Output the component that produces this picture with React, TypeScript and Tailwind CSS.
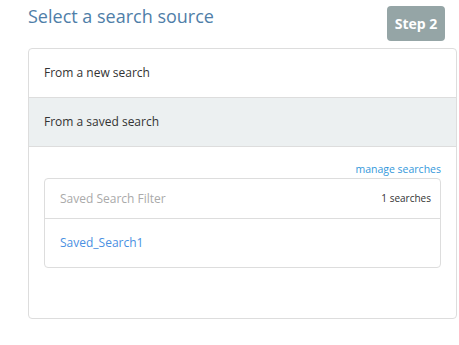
export default function App() {
  return (
    <div className="w-[459px] h-[345px] bg-white font-['Open_Sans',sans-serif] text-[#333]">
      <div className="pl-[28px] pr-[2px]">
        {/* Header */}
        <div className="flex items-start justify-between h-[48px]">
          <h1 className="pt-[4px] text-[18px] leading-[24px] text-[#4f7ea8]">Select a search source</h1>
          <div className="mt-[6px] mr-[12px] w-[58px] h-[35px] rounded-[4px] bg-[#95a5a6] text-white text-[14px] font-bold flex items-center justify-center">
            Step 2
          </div>
        </div>

        {/* Source panel */}
        <div className="border border-[#dddddd] rounded-[4px] h-[271px]">
          <div className="h-[49px] flex items-center px-[15px] text-[12px] border-b border-[#dddddd]">
            From a new search
          </div>
          <div className="h-[49px] flex items-center px-[15px] text-[12px] bg-[#ecf0f1] border-b border-[#dddddd]">
            From a saved search
          </div>
          <div className="px-[15px] pt-[15px]">
            <div className="text-right text-[10.5px] leading-[14px] text-[#3498db]">manage searches</div>
            <div className="mt-[2px] border border-[#dddddd] rounded-[4px]">
              <div className="h-[40px] flex items-center justify-between pl-[15px] pr-[9px] border-b border-[#dddddd]">
                <span className="text-[12px] text-[#aaaaaa]">Saved Search Filter</span>
                <span className="text-[10px] text-[#333]">1 searches</span>
              </div>
              <div className="h-[48px] flex items-center px-[15px] text-[12px] text-[#4a90e2]">
                Saved_Search1
              </div>
            </div>
          </div>
        </div>
      </div>
    </div>
  )
}
